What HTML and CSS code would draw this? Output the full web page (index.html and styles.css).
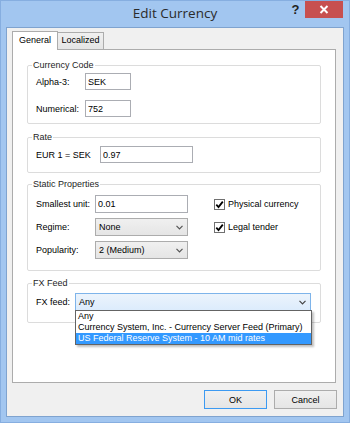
FILE: index.html
```html
<!DOCTYPE html>
<html lang="en">
<head>
    <meta charset="UTF-8">
    <title>Edit Currency</title>
    <link rel="stylesheet" href="styles.css">
</head>
<body>
    <div class="window">
        <div class="titlebar">
            <div class="spacer"></div>
            <div class="title">Edit Currency</div>
            <div class="controls">
                <span class="help">?</span>
                <span class="close">
                    <svg width="10" height="9" viewBox="0 0 10 9"><path d="M1.5 1 L8.5 8 M8.5 1 L1.5 8" stroke="#fff" stroke-width="2"/></svg>
                </span>
            </div>
        </div>

        <div class="client">
            <div class="tabs">
                <div class="tab active">General</div>
                <div class="tab">Localized</div>
            </div>

            <div class="panel">
                <!-- Currency code -->
                <fieldset class="group code">
                    <legend>Currency Code</legend>
                    <label>Alpha-3:</label>
                    <input type="text" class="field" value="SEK">
                    <label>Numerical:</label>
                    <input type="text" class="field" value="752">
                </fieldset>

                <!-- Rate -->
                <fieldset class="group rate">
                    <legend>Rate</legend>
                    <label>EUR 1 = SEK</label>
                    <input type="text" class="field" value="0.97">
                </fieldset>

                <!-- Static properties -->
                <fieldset class="group static">
                    <legend>Static Properties</legend>
                    <label>Smallest unit:</label>
                    <input type="text" class="field" value="0.01">
                    <div class="check"><span class="box"><svg width="9" height="9" viewBox="0 0 9 9"><path d="M1.3 4.6 L3.5 7 L7.8 1.6" fill="none" stroke="#000" stroke-width="1.8"/></svg></span>Physical currency</div>

                    <label>Regime:</label>
                    <div class="combo"><span>None</span><svg class="arrow" width="7" height="5" viewBox="0 0 7 5"><path d="M0.5 0.8 L3.5 3.8 L6.5 0.8" fill="none" stroke="#555" stroke-width="1.2"/></svg></div>
                    <div class="check"><span class="box"><svg width="9" height="9" viewBox="0 0 9 9"><path d="M1.3 4.6 L3.5 7 L7.8 1.6" fill="none" stroke="#000" stroke-width="1.8"/></svg></span>Legal tender</div>

                    <label>Popularity:</label>
                    <div class="combo"><span>2 (Medium)</span><svg class="arrow" width="7" height="5" viewBox="0 0 7 5"><path d="M0.5 0.8 L3.5 3.8 L6.5 0.8" fill="none" stroke="#555" stroke-width="1.2"/></svg></div>
                </fieldset>

                <!-- FX feed -->
                <fieldset class="group feed">
                    <legend>FX Feed</legend>
                    <label>FX feed:</label>
                    <div class="combo focused">
                        <span>Any</span>
                        <svg class="arrow" width="7" height="5" viewBox="0 0 7 5"><path d="M0.5 0.8 L3.5 3.8 L6.5 0.8" fill="none" stroke="#444" stroke-width="1.2"/></svg>
                        <ul class="dropdown">
                            <li>Any</li>
                            <li>Currency System, Inc. - Currency Server Feed (Primary)</li>
                            <li class="selected">US Federal Reserve System - 10 AM mid rates</li>
                        </ul>
                    </div>
                </fieldset>
            </div>

            <div class="actions">
                <button class="btn default">OK</button>
                <button class="btn">Cancel</button>
            </div>
        </div>
    </div>
</body>
</html>
```

FILE: styles.css
```css
* {
    margin: 0;
    padding: 0;
    box-sizing: border-box;
}

body {
    width: 350px;
    height: 423px;
    overflow: hidden;
    font-family: "Liberation Sans", Arial, sans-serif;
    font-size: 9px;
    color: #000;
}

.window {
    width: 350px;
    height: 423px;
    background-color: #a2c6f0;
    box-shadow: inset 0 0 0 1px #86aee0;
    display: flex;
    flex-direction: column;
}

/* title bar */
.titlebar {
    height: 27px;
    display: flex;
}

.spacer {
    width: 64px;
}

.title {
    flex: 1;
    text-align: center;
    font-family: "Open Sans", "Noto Sans", sans-serif;
    font-size: 13.5px;
    line-height: 26px;
    color: #2b2b2b;
}

.controls {
    width: 64px;
    display: flex;
    align-items: flex-start;
}

.help {
    width: 19px;
    margin-top: 2px;
    text-align: center;
    font-family: "Liberation Sans", Arial, sans-serif;
    font-weight: bold;
    font-size: 13px;
    line-height: 16px;
    color: #222;
}

.close {
    width: 38px;
    height: 17px;
    margin-top: 1px;
    background-color: #c75050;
    display: flex;
    justify-content: center;
    align-items: center;
}

/* client area */
.client {
    height: 390px;
    margin: 0 6px;
    border: 1px solid #7fa3cf;
    background-color: #f0f0f0;
    padding: 3px 7px 0 5px;
}

.tabs {
    height: 19px;
    display: flex;
    align-items: flex-end;
    position: relative;
    z-index: 1;
    margin-bottom: -1px;
}

.tab {
    height: 17px;
    width: 47px;
    margin-left: -1px;
    margin-bottom: 1px;
    border: 1px solid #acacac;
    border-bottom: none;
    background: linear-gradient(#f0f0f0, #e5e5e5);
    text-align: center;
    line-height: 15px;

    &.active {
        height: 19px;
        width: 46px;
        margin-left: 0;
        margin-bottom: 0;
        background: #fff;
        line-height: 16px;
    }
}

.panel {
    height: 334px;
    background-color: #fff;
    border: 1px solid #acacac;
    padding-top: 10px;
}

/* group boxes */
.group {
    margin: 0 14px;
    min-width: 0;
    border: 1px solid #dcdcdc;
    border-radius: 2px;
    padding: 2px 0 6px 8px;
    display: grid;
    align-items: center;

    legend {
        margin-left: -4px;
        padding: 0 1px;
        line-height: 11px;
        color: #1e1e1e;
    }

    label {
        white-space: nowrap;
    }
}

.code {
    grid-template-columns: 49px 46px;
    grid-auto-rows: 17px;
    row-gap: 10px;
}

.rate {
    margin-top: 8px;
    padding-top: 3px;
    padding-bottom: 9px;
    grid-template-columns: 64px 93px;
    grid-auto-rows: 17px;
}

.static {
    margin-top: 6px;
    padding-top: 5px;
    padding-bottom: 11px;
    grid-template-columns: 59px 93px auto;
    grid-auto-rows: 18px;
    row-gap: 5px;

    .check {
        margin-left: 26px;
    }
}

.feed {
    margin-top: 7px;
    padding-top: 4px;
    padding-bottom: 11px;
    grid-template-columns: 39px 236px;
    grid-auto-rows: 18px;
}

.field {
    height: 100%;
    width: 100%;
    border: 1px solid #abadb3;
    background: #fff;
    font: inherit;
    color: #000;
    padding: 0 2px;
    outline: none;
}

.combo {
    height: 100%;
    position: relative;
    border: 1px solid #acacac;
    background: linear-gradient(#f0f0f0, #e5e5e5);
    padding: 0 3px;
    display: flex;
    align-items: center;
    justify-content: space-between;

    .arrow {
        margin-right: 1px;
    }

    &.focused {
        border-color: #7eb4ea;
        background: linear-gradient(#ecf4fc, #dcecfc);
    }
}

.dropdown {
    position: absolute;
    top: 100%;
    left: -1px;
    right: -2px;
    list-style: none;
    background: #fff;
    border: 1px solid #646464;
    box-shadow: 2px 2px 2px rgba(0, 0, 0, 0.25);
    z-index: 2;

    li {
        height: 11px;
        line-height: 11px;
        padding-left: 2px;
        white-space: nowrap;
    }

    .selected {
        background-color: #3399ff;
        color: #fff;
    }
}

.check {
    display: flex;
    align-items: center;
    gap: 3px;
    white-space: nowrap;

    .box {
        width: 11px;
        height: 11px;
        border: 1px solid #707070;
        background: #fff;
        display: flex;
        justify-content: center;
        align-items: center;
    }
}

/* buttons */
.actions {
    margin-top: 7px;
    margin-right: -1px;
    display: flex;
    justify-content: flex-end;
    gap: 7px;
}

.btn {
    width: 63px;
    height: 19px;
    border: 1px solid #acacac;
    background: linear-gradient(#f0f0f0, #e5e5e5);
    font: inherit;
    color: #000;

    &.default {
        border-color: #3c9af2;
    }
}
```
